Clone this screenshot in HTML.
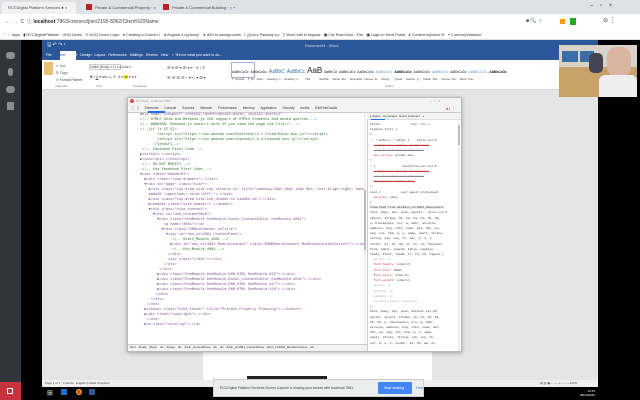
<!DOCTYPE html>
<html><head><meta charset="utf-8"><style>
*{margin:0;padding:0;box-sizing:border-box}
body{width:640px;height:400px;overflow:hidden;background:#000;font-family:"Liberation Sans",sans-serif;position:relative}
.a{position:absolute}
.t{font-size:4px;color:#444;white-space:nowrap}
.m{font-family:"Liberation Mono",monospace;font-size:3.6px;line-height:5px;white-space:pre;color:#7a4a8a}
</style></head><body>
<!-- chrome tabs -->
<div class="a" style="left:0;top:0;width:640px;height:14px;background:#dee1e6"></div>
<div class="a" style="left:2px;top:2px;width:74px;height:12px;background:#f2f2f2;border-radius:3px 3px 0 0"></div>
<div class="a t" style="left:8px;top:5px">RCCDigital Platform Services ●  ×</div>
<div class="a" style="left:86px;top:4px;width:6px;height:6px;background:#b22"></div>
<div class="a t" style="left:95px;top:5px">Private &amp; Commercial Property ·  ×</div>
<div class="a" style="left:163px;top:4px;width:6px;height:6px;background:#b22"></div>
<div class="a t" style="left:172px;top:5px">Private &amp; Commercial Building ·  ×   +</div>
<div class="a t" style="left:590px;top:3px;font-size:6px">–&nbsp;&nbsp;&nbsp;&nbsp;▫&nbsp;&nbsp;&nbsp;&nbsp;×</div>
<!-- address -->
<div class="a" style="left:0;top:14px;width:640px;height:15px;background:#fff"></div>
<div class="a t" style="left:5px;top:18px;font-size:5px">←&nbsp;&nbsp;→&nbsp;&nbsp;C&nbsp;&nbsp;ⓘ <b style="color:#222">localhost</b>:7863/connect/join/2195-8062/Client%20Name</div>
<div class="a" style="left:560px;top:19px;width:5px;height:5px;background:#f90"></div>
<div class="a" style="left:570px;top:18px;width:6px;height:7px;background:#2a2"></div>
<div class="a t" style="left:526px;top:18px;font-size:5px">■ 🔍 ☆</div>
<div class="a t" style="left:603px;top:17px;font-size:6px">⊖ ⋮</div>
<!-- bookmarks -->
<div class="a" style="left:0;top:29px;width:640px;height:11px;background:#fff;border-bottom:1px solid #ddd"></div>
<div class="a t" style="left:3px;top:32px;font-size:3.8px;color:#333">⋮⋮ Apps &nbsp; ▮ RCCDigitalPlatform &nbsp; UHQ Demo &nbsp; ⊙ UHQ Demo Login &nbsp; ● Creating a Custom I &nbsp;&nbsp; ● Angular 4 ng-templ &nbsp;&nbsp; ● IMG to backgrounds &nbsp; ◐ jQuery Passing a p &nbsp; ▯ ViewChild in Angular &nbsp; ▣ Car Road Auto - Fire &nbsp; ▣ Login to Kenti Portal &nbsp; ● Content Injection M &nbsp; ◓ CurrencyValidator</div>
<!-- left sidebar -->
<div class="a" style="left:0;top:40px;width:21px;height:345px;background:#2f353b"></div>
<div class="a" style="left:6px;top:52px;width:9px;height:7px;background:#8a9096;border-radius:3px"></div>
<div class="a" style="left:8px;top:68px;width:5px;height:8px;background:#8a9096;border-radius:3px"></div>
<div class="a" style="left:6px;top:86px;width:9px;height:7px;background:#8a9096;border-radius:4px"></div>
<div class="a" style="left:7px;top:102px;width:7px;height:8px;background:#8a9096"></div>
<div class="a" style="left:0;top:382px;width:21px;height:18px;background:#c8323c"></div>
<div class="a" style="left:7px;top:388px;width:6px;height:6px;border:1.5px solid #fff"></div>
<!-- word window -->
<div class="a" style="left:42px;top:40px;width:556px;height:342px;background:#e6e5e6"></div>
<div class="a" style="left:42px;top:40px;width:556px;height:20px;background:#2b579a"></div>
<div class="a t" style="left:47px;top:42px;color:#fff;font-size:5px">🖫 ↶ ↷ ▾</div>
<div class="a t" style="left:305px;top:43px;color:#dde">Document1 - Word</div>
<div class="a" style="left:60px;top:51px;width:16px;height:9px;background:#fff"></div>
<div class="a t" style="left:46px;top:53px;color:#fff;font-size:3.6px">File &nbsp;&nbsp;&nbsp;<span style="color:#2b579a">Home</span> &nbsp;&nbsp;Insert &nbsp;&nbsp;Design &nbsp;&nbsp;Layout &nbsp;&nbsp;References &nbsp;&nbsp;Mailings &nbsp;&nbsp;Review &nbsp;&nbsp;View &nbsp;&nbsp;♀ Tell me what you want to do...</div>
<div class="a" style="left:42px;top:60px;width:556px;height:30px;background:#fff;border-bottom:1px solid #d6d6d6"></div>
<div class="a" style="left:44px;top:62px;width:9px;height:13px;background:#e8c070"></div>
<div class="a t" style="left:56px;top:63px;font-size:3.4px;line-height:7px">✂ Cut<br>⎘ Copy<br>✔ Format Painter</div>
<div class="a" style="left:89px;top:64px;width:32px;height:6px;border:1px solid #ccc"></div>
<div class="a t" style="left:90px;top:65px;font-size:3.2px">Calibri (Body) ▾ 11 ▾ A A Aa ▾</div>
<div class="a t" style="left:90px;top:75px;font-size:3.6px"><b>B</b> <i>I</i> <u>U</u> ▾ abc x₂ x² &nbsp;A ▾ <span style="background:#ff0">ab</span> ▾ <span style="color:#c00">A</span> ▾</div>
<div class="a t" style="left:167px;top:65px;font-size:4px">☰ ▾ ☰ ▾ ☰ ▾ ⇤ ⇥ ↕ ¶</div>
<div class="a t" style="left:167px;top:75px;font-size:4px">☰ ☰ ☰ ☰ ↕ ▾ ◇ ▾ ⊞ ▾</div>
<div class="a t" style="left:55px;top:84px;font-size:3px;color:#777">Clipboard &nbsp;&nbsp;&nbsp;&nbsp;&nbsp;&nbsp;&nbsp;&nbsp;&nbsp;&nbsp;&nbsp;&nbsp;&nbsp;&nbsp;&nbsp;&nbsp;&nbsp;&nbsp;&nbsp;&nbsp;&nbsp;&nbsp;&nbsp;&nbsp;&nbsp;&nbsp;&nbsp;&nbsp;&nbsp;&nbsp;&nbsp;&nbsp;&nbsp;Font &nbsp;&nbsp;&nbsp;&nbsp;&nbsp;&nbsp;&nbsp;&nbsp;&nbsp;&nbsp;&nbsp;&nbsp;&nbsp;&nbsp;&nbsp;&nbsp;&nbsp;&nbsp;&nbsp;&nbsp;&nbsp;&nbsp;&nbsp;&nbsp;&nbsp;&nbsp;&nbsp;&nbsp;&nbsp;&nbsp;&nbsp;&nbsp;&nbsp;&nbsp;&nbsp;&nbsp;Paragraph</div>
<div class="a" style="left:231px;top:62px;width:24px;height:16px;border:1px solid #aac"></div>
<div class="a t" style="left:232px;top:66px;font-size:3.4px;color:#222;word-spacing:1px">AaBbCcDc AaBbCcDc <span style="color:#2e74b5;font-size:5px">AaBbC AaBbCc</span> <span style="font-size:8px">AaB</span> AaBbCcl AaBbCcDc AaBbCcDc <span style="color:#5b9bd5">AaBbCcDc</span> <b>AaBbCcDc</b> AaBbCcDc <span style="color:#5b9bd5">AaBbCcDc</span> AaBbCcDc <span style="color:#5b9bd5">AABBCCDC</span> <b>AaBbCcDc</b></div>
<div class="a t" style="left:232px;top:77px;font-size:2.8px;word-spacing:1px">¶ Normal &nbsp;¶ No Spac... Heading 1 &nbsp;Heading 2 &nbsp;&nbsp;&nbsp;Title &nbsp;&nbsp;&nbsp;&nbsp;Subtitle &nbsp;Subtle Em... Emphasis Intense E... Strong &nbsp;&nbsp;Quote &nbsp;Intense Q... Subtle Ref... Intense Re... Book Title</div>
<div class="a t" style="left:385px;top:84px;font-size:3px;color:#777">Styles</div>
<!-- word page -->
<div class="a" style="left:203px;top:340px;width:229px;height:42px;background:#fff"></div>
<!-- status bar -->
<div class="a" style="left:42px;top:380px;width:556px;height:7px;background:#f0f0f0"></div>
<div class="a t" style="left:45px;top:381px;font-size:3px">Page 1 of 1 &nbsp;&nbsp;0 words &nbsp;&nbsp;English (United Kingdom)</div>
<div class="a t" style="left:540px;top:381px;font-size:3px">▤ ▥ ▦ – ——|—— + 100%</div>
<!-- webcam -->
<div class="a" style="left:559px;top:45px;width:78px;height:52px;background:#c9a26a;overflow:hidden">
 <div class="a" style="left:0;top:0;width:78px;height:22px;background:#d8d3c8"></div>
 <div class="a" style="left:3px;top:6px;width:16px;height:11px;background:#3a6ea8"></div>
 <div class="a" style="left:21px;top:6px;width:14px;height:11px;background:#3a6ea8"></div>
 <div class="a" style="left:30px;top:8px;width:14px;height:20px;background:#445;border-radius:5px"></div>
 <div class="a" style="left:48px;top:2px;width:24px;height:30px;background:#d9b4a0;border-radius:10px"></div>
 <div class="a" style="left:40px;top:30px;width:38px;height:22px;background:#eee;border-radius:6px 6px 0 0"></div>
</div>
<!-- devtools -->
<div class="a" style="left:127px;top:97px;width:335px;height:255px;background:#fff;border:1px solid #bbb;box-shadow:0 1px 4px rgba(0,0,0,.3)"></div>
<div class="a" style="left:128px;top:98px;width:333px;height:7px;background:#f3f3f3"></div>
<div class="a" style="left:130px;top:99px;width:4px;height:4px;border-radius:50%;background:#e44"></div>
<div class="a t" style="left:136px;top:99px;font-size:3px;color:#999">DevTools - localhost:7863/</div>
<div class="a t" style="left:430px;top:98px;font-size:4px;color:#999">–&nbsp;&nbsp;▫&nbsp;&nbsp;×</div>
<div class="a" style="left:128px;top:105px;width:333px;height:8px;background:#f3f3f3;border-bottom:1px solid #ccc"></div>
<div class="a" style="left:148px;top:111px;width:17px;height:1.5px;background:#1a73e8"></div>
<div class="a t" style="left:131px;top:106px;font-size:3.3px;color:#333;word-spacing:2px">⬚ ▯ &nbsp;Elements &nbsp;Console &nbsp;Sources &nbsp;Network &nbsp;Performance &nbsp;Memory &nbsp;Application &nbsp;Security &nbsp;Audits &nbsp;EditThisCookie</div>
<div class="a t" style="left:446px;top:106px;font-size:4px;color:#d33">●1 <span style="color:#555">⋮</span></div>
<div class="a m" style="left:140px;top:113px">meta name="viewport" content="width=device-width, initial-scale=1"
<span style="color:#236e25">&lt;!-- HTML5 Shim and Respond.js IE8 support of HTML5 elements and media queries --&gt;</span>
<span style="color:#236e25">&lt;!-- WARNING: Respond.js doesn't work if you view the page via file:// --&gt;</span>
<span style="color:#236e25">&lt;!--[if lt IE 9]&gt;</span>
<span style="color:#236e25">        &lt;script src="https://oss.maxcdn.com/html5shiv/3.7.2/html5shiv.min.js"&gt;&lt;/script&gt;</span>
<span style="color:#236e25">        &lt;script src="https://oss.maxcdn.com/respond/1.4.2/respond.min.js"&gt;&lt;/script&gt;</span>
<span style="color:#236e25">      &lt;![endif]--&gt;</span>
<span style="color:#236e25"> &lt;!-- Facebook Pixel Code --&gt;</span>
▶&lt;script&gt;…&lt;/script&gt;
▶&lt;noscript&gt;…&lt;/noscript&gt;
<span style="color:#236e25"> &lt;!-- DO NOT MODIFY --&gt;</span>
<span style="color:#236e25"> &lt;!-- End Facebook Pixel Code --&gt;</span>
▼&lt;div class="header01"&gt;
  ▶&lt;div class="loop-drawers"&gt;…&lt;/div&gt;
  ▼&lt;div id="page" class="site"&gt;
    ▶&lt;div class="top-area site-top visible-xs" style="padding:10px 30px 10px 0px; text-align:right; background-color:
    #a6a29 !important; color:#fff;"&gt;…&lt;/div&gt;
    ▶&lt;div class="top-area site-top hidden-xs hidden-sm"&gt;…&lt;/div&gt;
    ▶&lt;header class="site-header"&gt;…&lt;/header&gt;
    ▼&lt;div class="site-content"&gt;
      ▼&lt;div id="dnn_ContentPane"&gt;
        ▼&lt;div class="DnnModule DnnModule-Rucks_ContentEditor DnnModule-4081"&gt;
           &lt;a name="4081"&gt;&lt;/a&gt;
          ▼&lt;div class="DNNContainer_noTitle"&gt;
            ▼&lt;div id="dnn_ctr4081_ContentPane"&gt;
<span style="color:#236e25">               &lt;!-- Start_Module_4081 --&gt;</span>
              ▶&lt;div id="dnn_ctr4081_ModuleContent" class="DNNModuleContent ModRucksContentEditorC"&gt;…&lt;/div&gt;
<span style="color:#236e25">               &lt;!-- End_Module_4081 --&gt;</span>
             &lt;/div&gt;
             &lt;div class="clear"&gt;&lt;/div&gt;
           &lt;/div&gt;
         &lt;/div&gt;
        ▶&lt;div class="DnnModule DnnModule-DNN_HTML DnnModule-415"&gt;…&lt;/div&gt;
        ▶&lt;div class="DnnModule DnnModule-Rucks_ContentEditor DnnModule-4032"&gt;…&lt;/div&gt;
        ▶&lt;div class="DnnModule DnnModule-DNN_HTML DnnModule-417"&gt;…&lt;/div&gt;
        ▶&lt;div class="DnnModule DnnModule-DNN_HTML DnnModule-418"&gt;…&lt;/div&gt;
       &lt;/div&gt;
     &lt;/div&gt;
   &lt;/div&gt;
  ▶&lt;footer class="site-footer" title="Private Property Planning"&gt;…&lt;/footer&gt;
  ▶&lt;div class="copyright"&gt;…&lt;/div&gt;
   &lt;/div&gt;
  ▶&lt;a class="scrollup"&gt;…&lt;/a&gt;</div>
<div class="a" style="left:364px;top:113px;width:2px;height:235px;background:#eee"></div>
<div class="a" style="left:364px;top:190px;width:2px;height:60px;background:#bbb"></div>
<div class="a" style="left:128px;top:344px;width:239px;height:7px;background:#f3f3f3;border-top:1px solid #ccc"></div>
<div class="a t" style="left:130px;top:345px;font-size:3px;color:#333;word-spacing:2px">html #body #form div #page div #dnn_ContentPane div div #dnn_ctr4081_ContentPane #dnn_ctr4081_ModuleContent  div</div>
<!-- styles pane -->
<div class="a" style="left:367px;top:113px;width:94px;height:238px;background:#fff;border-left:1px solid #ccc;overflow:hidden"></div>
<div class="a" style="left:367px;top:113px;width:94px;height:7px;background:#f3f3f3;border-bottom:1px solid #ddd"></div>
<div class="a t" style="left:370px;top:114px;font-size:3px;color:#333">▸ Styles &nbsp; Computed &nbsp; Event Listeners &nbsp; »</div>
<div class="a" style="left:371px;top:119px;width:14px;height:1px;background:#1a73e8"></div>
<div class="a m" style="left:370px;top:122px;font-size:3px;line-height:5.2px;color:#333;height:228px;overflow:hidden">Filter                :hov .cls +
element.style {
}
*, *:before, *:after {    style.css:9
  <s style="color:#c33">-webkit-box-sizing: border-box;</s>
  <s style="color:#888">-moz-box-sizing: border-box;</s>
  <span style="color:#c33">box-sizing</span>: border-box;
}
* {               bootstrap.min.css:5
  <s style="color:#c33">-webkit-box-sizing: border-box;</s>
  <s style="color:#888">-moz-box-sizing: border-box;</s>
  <s style="color:#c33">box-sizing: border-box;</s>
}
slot {           user agent stylesheet
  <span style="color:#c33">display</span>: none;
}
<span style="background:#eee">Inherited from div#dnn_ctr4081_ModuleCont</span>
html, body, div, span, applet,  style.css:5
object, iframe, h1, h2, h3, h4, h5, h6,
p, blockquote, pre, a, abbr, acronym,
address, big, cite, code, del, dfn, em,
img, ins, kbd, q, s, samp, small, strike,
strong, sub, sup, tt, var, b, u, i,
center, dl, dt, dd, ol, ul, li, fieldset,
form, label, legend, table, caption,
tbody, tfoot, thead, tr, th, td, figure {
  <span style="color:#aaa">border: 0;</span>
  <span style="color:#c33">font-family</span>: inherit;
  <span style="color:#c33">font-size</span>: 100%;
  <span style="color:#c33">font-style</span>: inherit;
  <span style="color:#c33">font-weight</span>: inherit;
  <span style="color:#aaa">margin: 0;</span>
  <span style="color:#aaa">outline: 0;</span>
  <span style="color:#aaa">padding: 0;</span>
  <span style="color:#aaa">vertical-align: baseline;</span>
}
html, body, div, span, default.css:19
applet, object, iframe, h1, h2, h3, h4,
h5, h6, p, blockquote, pre, a, abbr,
acronym, address, big, cite, code, del,
dfn, em, img, ins, kbd, q, s, samp,
small, strike, strong, sub, sup, tt,
var, b, u, i, center, dl, dt, dd, ol,</div>
<div class="a" style="left:458px;top:121px;width:2px;height:230px;background:#eee"></div>
<div class="a" style="left:458px;top:125px;width:2px;height:20px;background:#bbb"></div>
<!-- taskbar -->
<div class="a" style="left:21px;top:387px;width:619px;height:13px;background:#000"></div>
<div class="a t" style="left:47px;top:389px;font-size:7px;color:#fff">⊞</div>
<div class="a" style="left:61px;top:389px;width:6px;height:6px;background:#1e70c8"></div>
<div class="a" style="left:76px;top:389px;width:6px;height:6px;border-radius:50%;background:#db4437;border:1.5px solid #f4c20d"></div>
<div class="a" style="left:89px;top:389px;width:6px;height:6px;background:#2b579a"></div>
<div class="a t" style="left:580px;top:389px;font-size:3px;color:#fff;line-height:4px;text-align:right">12:43<br>08/10/2016</div>
<!-- share bar -->
<div class="a" style="left:247px;top:376px;width:80px;height:3px;background:#222"></div>
<div class="a" style="left:213px;top:379px;width:211px;height:18px;background:#eceded;border:1px solid #ccc"></div>
<div class="a t" style="left:218px;top:386px;font-size:3.4px;color:#444">⁝ RCCDigital Platform Services Screen Capture is sharing your screen with localhost:7863.</div>
<div class="a" style="left:378px;top:382px;width:34px;height:12px;background:#4285f4;border-radius:1px"></div>
<div class="a t" style="left:384px;top:386px;font-size:3.6px;color:#fff">Stop sharing</div>
<div class="a t" style="left:416px;top:386px;font-size:3.6px;color:#4285f4">Hide</div>
</body></html>
